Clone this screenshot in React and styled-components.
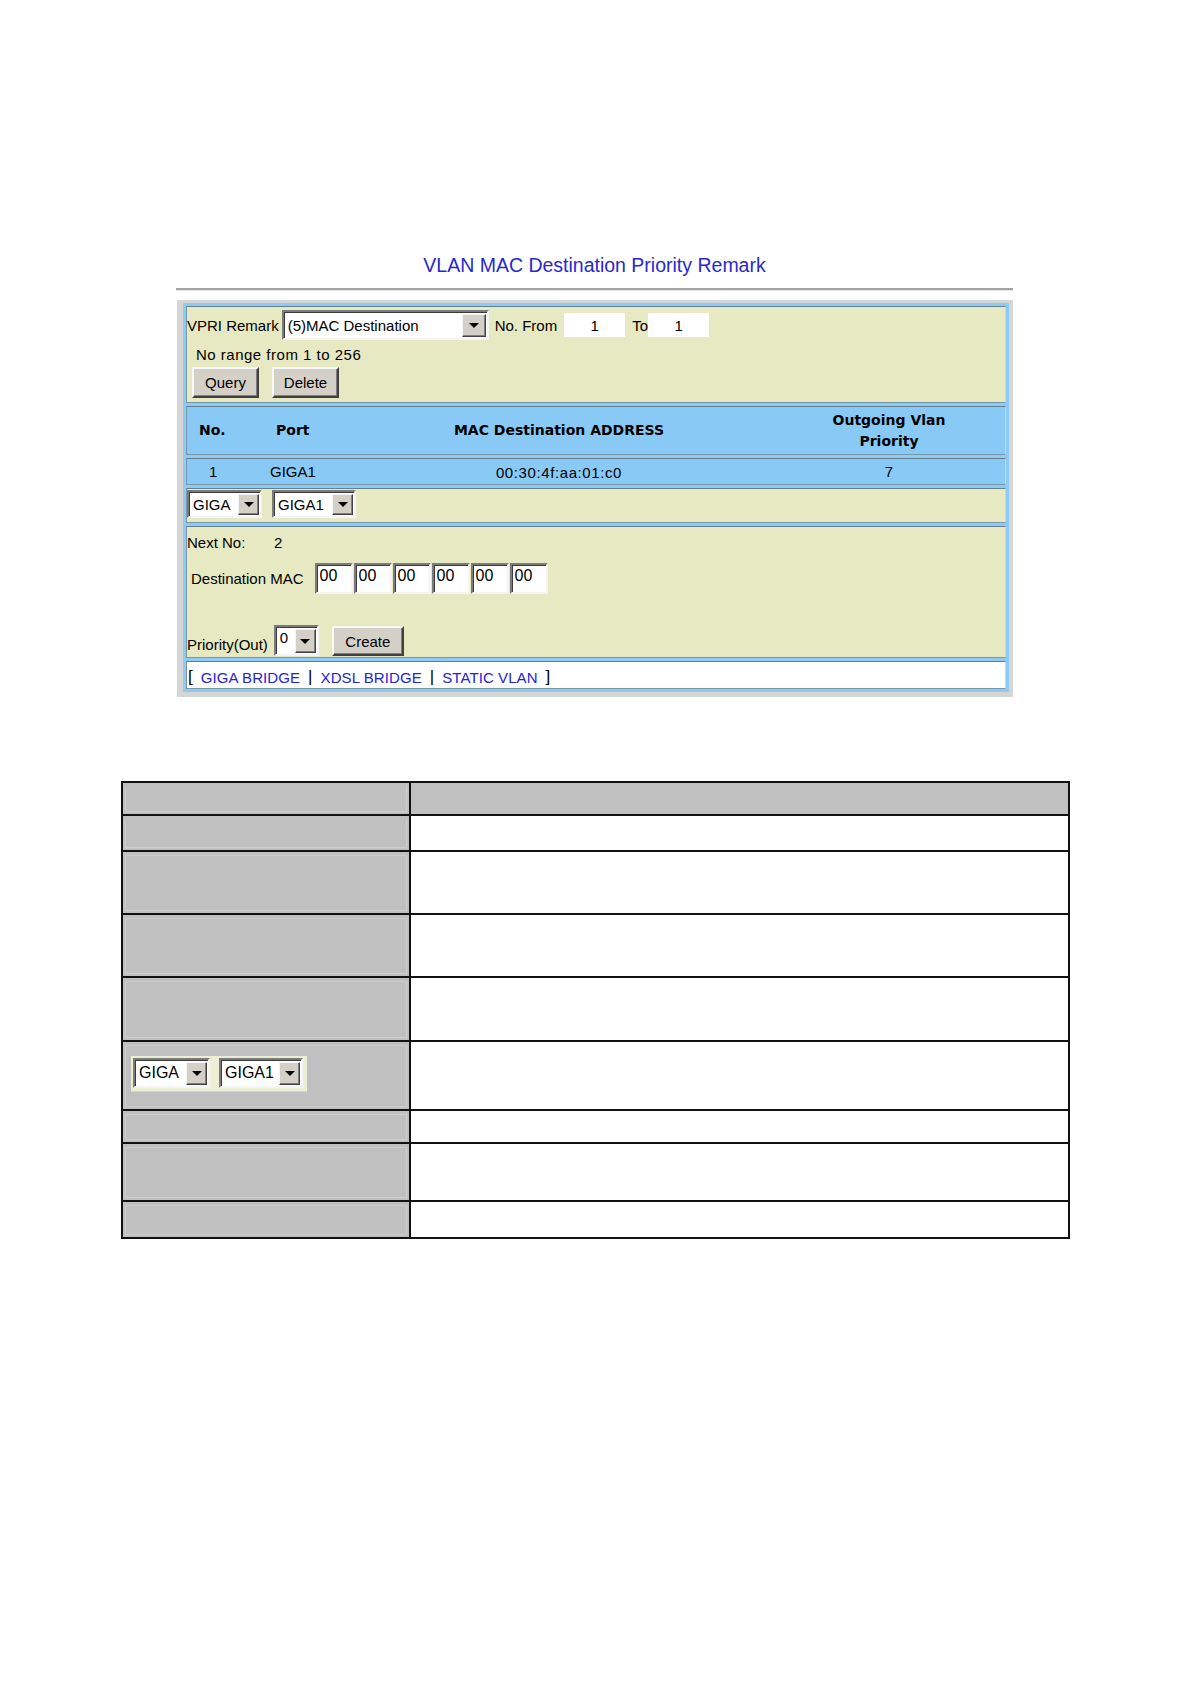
import styled, { createGlobalStyle } from 'styled-components'

const Global = createGlobalStyle`
  html, body { margin: 0; padding: 0; background: #fff; }
  body { font-family: "Liberation Sans", Arial, sans-serif; color: #000; }
  * { box-sizing: border-box; }
`

const Page = styled.div`
  width: 1190px;
  min-height: 1684px;
  padding-top: 253px;
`

const Title = styled.h1`
  margin: 0 0 0 176px;
  width: 837px;
  height: 24px;
  line-height: 24px;
  text-align: center;
  font-size: 19.5px;
  font-weight: normal;
  color: #2828d2;
`

const Rule = styled.div`
  margin: 11px 0 0 176px;
  width: 837px;
  height: 3px;
  border-top: 2px solid #a3a3a3;
  border-bottom: 1px solid #e4e4e4;
`

const Panel = styled.div`
  margin: 9px 0 0 177px;
  width: 836px;
  height: 397px;
  background: #d6d6d6;
  padding: 3px 4px 5px 6px;
`

const Frame = styled.div`
  height: 100%;
  background: #8ecaf2;
  padding: 3px;
  display: flex;
  flex-direction: column;
  gap: 3px;
`

const Section = styled.div`
  height: ${p => p.$h}px;
  background: ${p => p.$bg || '#e6e9c1'};
  border: 1px solid;
  border-color: #64808f #b9dcf3 #7997ab #7997ab;
  font-size: 15px;
  padding: ${p => p.$pad || '0'};
`

const Line = styled.div`
  display: flex;
  align-items: ${p => p.$align || 'center'};
  height: ${p => p.$h}px;
  margin-top: ${p => p.$mt || 0}px;
  padding-left: ${p => p.$pl || 0}px;
  gap: ${p => p.$gap || 0}px;
  letter-spacing: ${p => p.$ls || 0}px;
`

const Label = styled.span`
  margin-right: ${p => p.$mr || 0}px;
  margin-left: ${p => p.$ml || 0}px;
  margin-bottom: ${p => p.$mb || 0}px;
  width: ${p => (p.$w ? `${p.$w}px` : 'auto')};
  flex: none;
  white-space: nowrap;
`

const SelectBox = styled.div`
  display: flex;
  align-items: ${p => (p.$top ? 'flex-start' : 'center')};
  width: ${p => p.$w}px;
  height: ${p => p.$h}px;
  background: #fff;
  border: 2px solid;
  border-color: #7b7b7b #f4f4f4 #f4f4f4 #7b7b7b;
  box-shadow: inset 1px 1px 0 #3c3c3c;
  padding: 1px 1px 1px 4px;
  font-size: ${p => p.$fs || 15}px;
  flex: none;
  span { flex: 1; white-space: nowrap; overflow: hidden; padding-top: ${p => (p.$top ? 1 : 0)}px; }
`

const Arrow = styled.div`
  width: ${p => p.$w || 21}px;
  align-self: stretch;
  margin-top: 1px;
  background: #d4d0c8;
  border: 1px solid;
  border-color: #f4f4f4 #404040 #404040 #f4f4f4;
  box-shadow: inset -1px -1px 0 #808080;
  display: flex;
  align-items: center;
  justify-content: center;
  flex: none;
  &::after {
    content: '';
    border-left: 5px solid transparent;
    border-right: 5px solid transparent;
    border-top: 5px solid #000;
  }
`

const Select = ({ w, h, value, top, fs, aw }) => (
  <SelectBox $w={w} $h={h} $top={top} $fs={fs}>
    <span>{value}</span>
    <Arrow $w={aw} />
  </SelectBox>
)

const FlatInput = styled.input`
  width: 61px;
  height: 24px;
  border: none;
  background: #fff;
  text-align: center;
  font: 15px "Liberation Sans", Arial, sans-serif;
  padding: 0;
  margin-right: ${p => p.$mr || 0}px;
  flex: none;
  outline: none;
`

const MacInput = styled.input`
  width: 38px;
  height: 31px;
  background: #fff;
  border: 2px solid;
  border-color: #7b7b7b #f4f4f4 #f4f4f4 #7b7b7b;
  box-shadow: inset 1px 1px 0 #3c3c3c;
  font: 16px "Liberation Sans", Arial, sans-serif;
  padding: 0 0 5px 3px;
  flex: none;
  outline: none;
`

const Button = styled.button`
  width: ${p => p.$w}px;
  height: ${p => p.$h || 31}px;
  background: #d4d0c8;
  border: 2px solid;
  border-color: #f8f8f8 #404040 #404040 #f8f8f8;
  box-shadow: inset -1px -1px 0 #808080;
  font: 15px "Liberation Sans", Arial, sans-serif;
  color: #000;
  padding: 0;
  margin-left: ${p => p.$ml || 0}px;
  flex: none;
`

const GridRow = styled.div`
  display: grid;
  grid-template-columns: 70px 120px 1fr 232px;
  align-items: center;
  height: 100%;
  font-family: ${p => (p.$head ? '"DejaVu Sans", Verdana, sans-serif' : '"Liberation Sans", Arial, sans-serif')};
  font-weight: ${p => (p.$head ? 'bold' : 'normal')};
  font-size: ${p => (p.$head ? 14 : 15)}px;
  line-height: ${p => (p.$head ? 21 : 18)}px;
`

const Cell = styled.div`
  padding-left: ${p => p.$pl || 0}px;
  padding-right: ${p => p.$pr || 0}px;
  text-align: ${p => (p.$center ? 'center' : 'left')};
  letter-spacing: ${p => p.$ls || 0}px;
  margin-top: ${p => p.$mt || 0}px;
`

const LinkBar = styled.div`
  display: flex;
  align-items: center;
  height: 100%;
  padding: 4px 0 0 1px;
  font-size: 15px;
  gap: 8px;
  letter-spacing: 0.08px;
`

const Bracket = styled.span`
  font-size: 17px;
  color: #000;
`

const Link = styled.a`
  color: #2323d8;
  text-decoration: none;
`

/* description table below the screenshot */
const Spec = styled.div`
  margin: 84px 0 0 121px;
  width: 949px;
  border: 2px solid #111;
`

const SpecRow = styled.div`
  display: flex;
  height: ${p => p.$h}px;
  border-bottom: ${p => (p.$last ? 'none' : '2px solid #111')};
`

const KeyCell = styled.div`
  width: 288px;
  flex: none;
  background: #c0c0c0;
  border-right: 2px solid #111;
  padding: 3px 2px 2px 2px;
  display: flex;
`

const KeyInner = styled.div`
  flex: 1;
  border: 1px solid #cdcdcd;
  border-top-color: ${p => (p.$plain ? '#c0c0c0' : '#cdcdcd')};
  padding: 10px 0 0 5px;
`

const ValueCell = styled.div`
  flex: 1;
  background: ${p => (p.$head ? '#c0c0c0' : '#fff')};
`

const Snippet = styled.div`
  display: inline-flex;
  gap: 9px;
  padding: 2px 4px 3px 2px;
  background: #eceed6;
  box-shadow: 0 1px 0 #d8dac0;
`

const specRows = [33, 36, 63, 63, 64, 69, 33, 58, 35]

export default function App() {
  return (
    <Page>
      <Global />
      <Title>VLAN MAC Destination Priority Remark</Title>
      <Rule />
      <Panel>
        <Frame>
          <Section $h={97} $pad="3px 0 0 0">
            <Line $h={30}>
              <Label $mr={3}>VPRI Remark</Label>
              <Select w={207} h={30} value="(5)MAC Destination" aw={24} />
              <Label $ml={6} $mr={7}>No. From</Label>
              <FlatInput readOnly value="1" $mr={7} />
              <Label>To</Label>
              <FlatInput readOnly value="1" />
            </Line>
            <Line $h={18} $mt={5} $pl={9} $ls={0.5}>No range from 1 to 256</Line>
            <Line $h={31} $mt={4} $pl={5} $gap={13}>
              <Button $w={67}>Query</Button>
              <Button $w={67}>Delete</Button>
            </Line>
          </Section>
          <Section $h={49} $bg="#88c9f6">
            <GridRow $head>
              <Cell $pl={12}>No.</Cell>
              <Cell $pl={19}>Port</Cell>
              <Cell $center $pr={32}>MAC Destination ADDRESS</Cell>
              <Cell $center>Outgoing Vlan<br />Priority</Cell>
            </GridRow>
          </Section>
          <Section $h={27} $bg="#88c9f6">
            <GridRow>
              <Cell $pl={22}>1</Cell>
              <Cell $pl={13}>GIGA1</Cell>
              <Cell $center $pr={32} $ls={0.6} $mt={2}>00:30:4f:aa:01:c0</Cell>
              <Cell $center>7</Cell>
            </GridRow>
          </Section>
          <Section $h={35} $pad="1px 0 0 0">
            <Line $h={28} $gap={10}>
              <Select w={75} h={28} value="GIGA" />
              <Select w={84} h={28} value="GIGA1" />
            </Line>
          </Section>
          <Section $h={132} $pad="6px 0 0 0">
            <Line $h={18}>
              <Label $w={87}>Next No:</Label>
              <span>2</span>
            </Line>
            <Line $h={31} $mt={12} $pl={4} $gap={1}>
              <Label $mr={10}>Destination MAC</Label>
              {[0, 1, 2, 3, 4, 5].map(i => (
                <MacInput key={i} readOnly value="00" />
              ))}
            </Line>
            <Line $h={32} $mt={30} $align="flex-end">
              <Label $mr={6} $mb={3}>Priority(Out)</Label>
              <Select w={45} h={31} value="0" top aw={21} />
              <Button $w={72} $h={30} $ml={13}>Create</Button>
            </Line>
          </Section>
          <Section $h={28} $bg="#fff">
            <LinkBar>
              <Bracket>[</Bracket>
              <Link href="#">GIGA BRIDGE</Link>
              <Bracket>|</Bracket>
              <Link href="#">XDSL BRIDGE</Link>
              <Bracket>|</Bracket>
              <Link href="#">STATIC VLAN</Link>
              <Bracket>]</Bracket>
            </LinkBar>
          </Section>
        </Frame>
      </Panel>

      <Spec>
        {specRows.map((h, i) => (
          <SpecRow key={i} $h={h} $last={i === specRows.length - 1}>
            <KeyCell>
              <KeyInner $plain={i < 2}>
                {i === 5 && (
                  <Snippet>
                    <Select w={77} h={30} value="GIGA" fs={16} />
                    <Select w={84} h={30} value="GIGA1" fs={16} />
                  </Snippet>
                )}
              </KeyInner>
            </KeyCell>
            <ValueCell $head={i === 0} />
          </SpecRow>
        ))}
      </Spec>
    </Page>
  )
}
